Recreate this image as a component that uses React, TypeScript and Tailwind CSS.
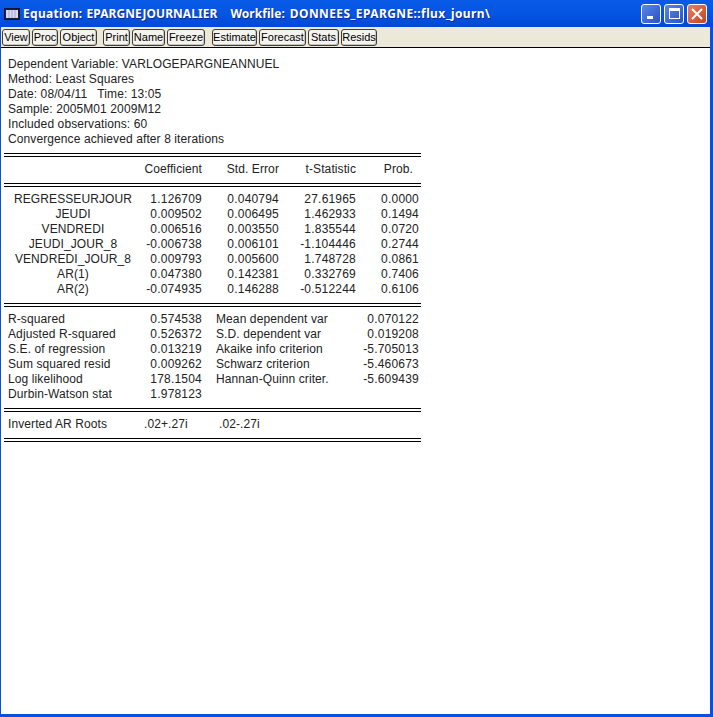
const Rule = () => (
  <div className="w-[417px] h-[4px] border-y border-black" />
);

const ToolBtn = ({ w, label }: { w: number; label: string }) => (
  <div
    style={{ width: w }}
    className="h-[17px] flex items-center justify-center rounded-[3px] border border-[#3c3c3c] bg-[#f4f3ee] text-[11px] leading-none text-black shadow-[inset_-1px_-1px_0_#c9c7ba]"
  >
    {label}
  </div>
);

const header = [
  "Dependent Variable: VARLOGEPARGNEANNUEL",
  "Method: Least Squares",
  "Date: 08/04/11   Time: 13:05",
  "Sample: 2005M01 2009M12",
  "Included observations: 60",
  "Convergence achieved after 8 iterations",
];

const coefs = [
  ["REGRESSEURJOUR", "1.126709", "0.040794", "27.61965", "0.0000"],
  ["JEUDI", "0.009502", "0.006495", "1.462933", "0.1494"],
  ["VENDREDI", "0.006516", "0.003550", "1.835544", "0.0720"],
  ["JEUDI_JOUR_8", "-0.006738", "0.006101", "-1.104446", "0.2744"],
  ["VENDREDI_JOUR_8", "0.009793", "0.005600", "1.748728", "0.0861"],
  ["AR(1)", "0.047380", "0.142381", "0.332769", "0.7406"],
  ["AR(2)", "-0.074935", "0.146288", "-0.512244", "0.6106"],
];

const stats = [
  ["R-squared", "0.574538", "Mean dependent var", "0.070122"],
  ["Adjusted R-squared", "0.526372", "S.D. dependent var", "0.019208"],
  ["S.E. of regression", "0.013219", "Akaike info criterion", "-5.705013"],
  ["Sum squared resid", "0.009262", "Schwarz criterion", "-5.460673"],
  ["Log likelihood", "178.1504", "Hannan-Quinn criter.", "-5.609439"],
  ["Durbin-Watson stat", "1.978123", "", ""],
];

export default function App() {
  return (
    <div
      className="w-[713px] h-[717px] flex flex-col bg-[#0a4fe0] overflow-hidden"
      style={{ fontFamily: '"Liberation Sans", Arial, sans-serif' }}
    >
      <div className="h-[27px] shrink-0 flex items-center pl-[4px] bg-gradient-to-b from-[#0a5ae6] via-[#0455e3] to-[#0347d6]">
        <svg width="16" height="12" viewBox="0 0 16 12" className="shrink-0">
          <rect x="0.5" y="0.5" width="15" height="11" fill="#1b1b3a" stroke="#15153a" />
          <rect x="2" y="2" width="12" height="8" fill="#d8d8ee" />
          <path d="M5 2v8M8 2v8M11 2v8" stroke="#a6a6d8" strokeWidth="1" />
        </svg>
        <div
          className="ml-[3px] flex text-white font-bold text-[12px] whitespace-pre leading-none tracking-[0.05px] [text-shadow:1px_1px_0_#0a2a9a]"
          style={{ fontFamily: '"Noto Sans", sans-serif' }}
        >
          <span className="tracking-[0.3px]">Equation:</span>
          <span className="ml-[4px]">EPARGNEJOURNALIER</span>
          <span className="ml-[13px]">Workfile:</span>
          <span className="ml-[5px] tracking-[0.4px]">{"DONNEES_EPARGNE::flux_journ\\"}</span>
        </div>
        <div className="ml-auto flex gap-[3px] pr-[6px]">
          <div className="w-[20px] h-[20px] rounded-[3px] border border-white bg-gradient-to-br from-[#5c86ea] to-[#2a50c8] flex items-end pl-[5px] pb-[4px]">
            <div className="w-[6px] h-[3px] bg-white" />
          </div>
          <div className="w-[20px] h-[20px] rounded-[3px] border border-white bg-gradient-to-br from-[#5c86ea] to-[#2a50c8] flex items-center justify-center">
            <div className="w-[11px] h-[11px] border border-white border-t-[3px]" />
          </div>
          <div className="w-[20px] h-[20px] rounded-[3px] border border-white bg-gradient-to-br from-[#e8805f] to-[#c8401c] flex items-center justify-center">
            <svg width="12" height="12" viewBox="0 0 12 12">
              <path d="M1 1l10 10M11 1L1 11" stroke="white" strokeWidth="2" />
            </svg>
          </div>
        </div>
      </div>

      <div className="flex-1 flex flex-col min-h-0 ml-[1px] mr-[3px] mb-[3px]">
        <div className="h-[20px] shrink-0 flex items-center pl-[1px] gap-[2px] bg-[#ece9d8]">
          <ToolBtn w={28} label="View" />
          <ToolBtn w={26} label="Proc" />
          <ToolBtn w={37} label="Object" />
          <div className="w-[2px]" />
          <ToolBtn w={27} label="Print" />
          <ToolBtn w={33} label="Name" />
          <ToolBtn w={38} label="Freeze" />
          <div className="w-[3px]" />
          <ToolBtn w={45} label="Estimate" />
          <ToolBtn w={47} label="Forecast" />
          <ToolBtn w={31} label="Stats" />
          <ToolBtn w={36} label="Resids" />
        </div>
        <div className="flex-1 min-h-0 bg-white border-t border-black pl-[3px] pt-[9px] text-[12px] leading-[15px] text-[#222222]">
          <div className="pl-[4px] whitespace-pre tracking-[0.1px]">
            {header.map((h) => (
              <div key={h}>{h}</div>
            ))}
          </div>
          <div className="h-[6px]" />
          <Rule />
          <div className="grid grid-cols-[134px_64px_77px_77px_57px] mt-[5px] mb-[6px] tracking-[0.1px] text-right">
            <div />
            <div>Coefficient</div>
            <div>Std. Error</div>
            <div>t-Statistic</div>
            <div>Prob.</div>
          </div>
          <Rule />
          <div className="mt-[5px] mb-[6px]">
            {coefs.map((r) => (
              <div key={r[0]} className="grid grid-cols-[134px_64px_77px_77px_63px] text-right tracking-[0.2px]">
                <div className="text-center pl-[4px] tracking-[0.1px]">{r[0]}</div>
                <div>{r[1]}</div>
                <div>{r[2]}</div>
                <div>{r[3]}</div>
                <div>{r[4]}</div>
              </div>
            ))}
          </div>
          <Rule />
          <div className="mt-[5px] mb-[6px]">
            {stats.map((r) => (
              <div key={r[0]} className="grid grid-cols-[134px_64px_14px_140px_63px] tracking-[0.1px]">
                <div className="pl-[4px]">{r[0]}</div>
                <div className="text-right tracking-[0.2px]">{r[1]}</div>
                <div />
                <div>{r[2]}</div>
                <div className="text-right tracking-[0.2px]">{r[3]}</div>
              </div>
            ))}
          </div>
          <Rule />
          <div className="flex mt-[5px] mb-[6px] tracking-[0.1px]">
            <div className="w-[140px] pl-[4px]">Inverted AR Roots</div>
            <div className="w-[75px]">.02+.27i</div>
            <div>.02-.27i</div>
          </div>
          <Rule />
        </div>
      </div>
    </div>
  );
}
